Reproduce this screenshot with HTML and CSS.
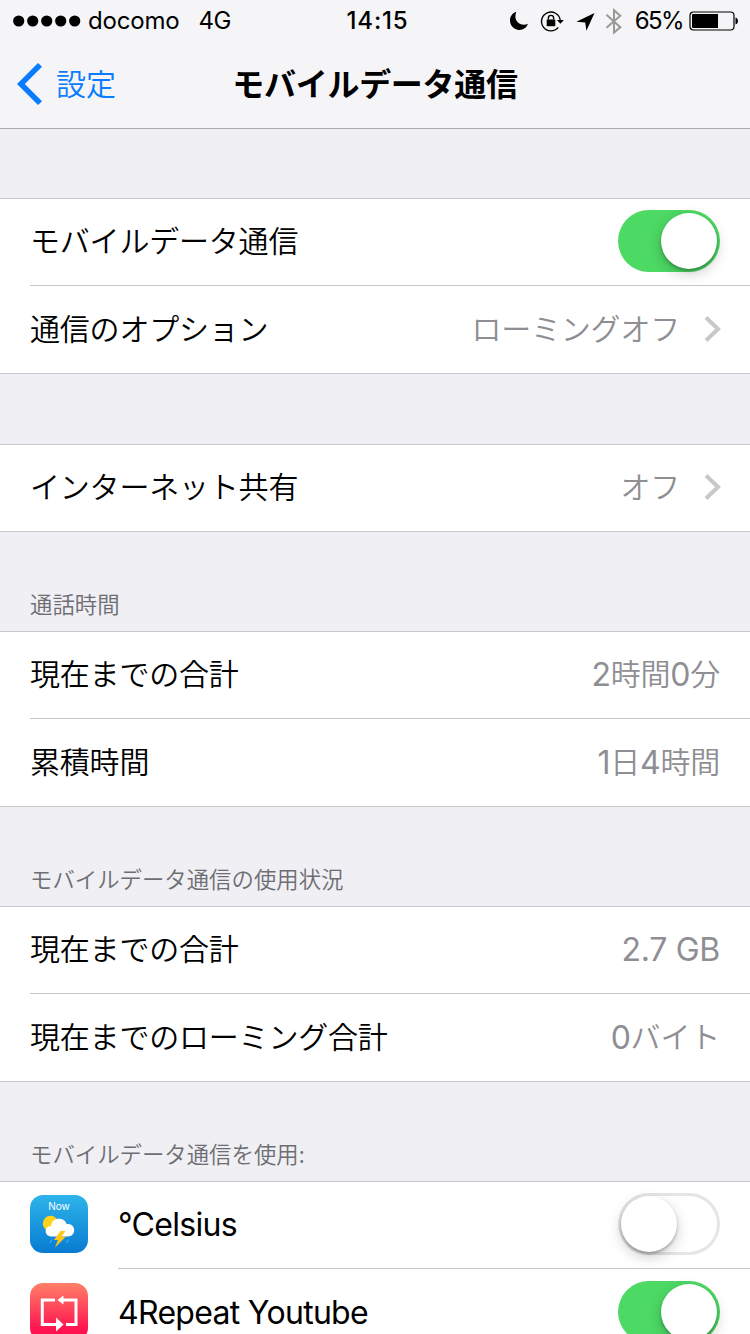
FILE: index.html
```html
<!DOCTYPE html>
<html lang="ja">
<head>
<meta charset="UTF-8">
<meta name="viewport" content="width=device-width, initial-scale=1.0">
<title>モバイルデータ通信</title>
<link rel="stylesheet" href="styles.css">
</head>
<body>
  <header class="header">
    <div class="status-bar">
      <div class="status-left">
        <svg class="signal" width="68" height="12" viewBox="0 0 68 12">
          <circle cx="5.7" cy="6" r="5.6"/>
          <circle cx="19.7" cy="6" r="5.6"/>
          <circle cx="33.7" cy="6" r="5.6"/>
          <circle cx="47.7" cy="6" r="5.6"/>
          <circle cx="61.7" cy="6" r="5.6"/>
        </svg>
        <span class="carrier">docomo</span>
        <span class="network">4G</span>
      </div>
      <div class="clock">14:15</div>
      <div class="status-right">
        <svg class="status-icons" width="118" height="40" viewBox="0 0 118 40">
          <!-- おやすみモード -->
          <path d="M8.3 10.8C4.8 11.9 2 15.2 2 19.3C2 24.7 6 28.9 11.3 28.9C15.3 28.9 18.7 26.5 20 22.7C18.7 23.4 17.3 23.8 15.8 23.8C10.8 23.8 7.4 20.2 7.4 15.6C7.4 13.8 7.7 12.2 8.3 10.8Z"/>
          <!-- 画面の向きのロック -->
          <path d="M50.2 26.4A9.4 9.4 0 1 1 52.2 19" fill="none" stroke="#000" stroke-width="1.4"/>
          <path d="M48.9 18.9H55.9L52.4 22.8Z"/>
          <path d="M38.7 18.5H47.3V25.2H38.7Z"/>
          <path d="M40.4 18.6V16.8C40.4 13.6 45.6 13.6 45.6 16.8V18.6" fill="none" stroke="#000" stroke-width="1.4"/>
          <!-- 位置情報 -->
          <path d="M86.5 12L78.4 29.7L77.2 21.6L68.4 20.7Z"/>
          <!-- Bluetooth -->
          <path d="M98.5 13.8L112.3 26.2L106 31.5V9.2L112.3 14.8L98.5 26.8" fill="none" stroke="#999" stroke-width="2"/>
        </svg>
        <span class="percent">65%</span>
        <svg class="battery" width="50" height="20" viewBox="0 0 50 20">
          <rect x="1" y="1" width="44" height="18" rx="3.5" fill="none" stroke="#000" stroke-width="1.2"/>
          <path d="M4 3H29V17H4Q3 17 3 16V4Q3 3 4 3Z"/>
          <path d="M46.5 6.6C49.8 7 49.8 13 46.5 13.4Z"/>
        </svg>
      </div>
    </div>
    <nav class="nav-bar">
      <a href="#" class="back">
        <svg width="27" height="42" viewBox="0 0 27 42">
          <path d="M22 0L26 3.8L8.8 21L26 38.2L22 42L1 21Z" fill="#0a7cff"/>
        </svg>
        <span>設定</span>
      </a>
      <h1 class="title">モバイルデータ通信</h1>
    </nav>
  </header>

  <main class="settings">
    <ul class="group first">
      <li class="row">
        <span class="label">モバイルデータ通信</span>
        <span class="switch on"></span>
      </li>
      <li class="row">
        <span class="label">通信のオプション</span>
        <span class="value">ローミングオフ</span>
        <svg class="chevron" width="17" height="26" viewBox="0 0 17 26"><path d="M2 1.5L14 13L2 24.5"/></svg>
      </li>
    </ul>

    <ul class="group">
      <li class="row">
        <span class="label">インターネット共有</span>
        <span class="value">オフ</span>
        <svg class="chevron" width="17" height="26" viewBox="0 0 17 26"><path d="M2 1.5L14 13L2 24.5"/></svg>
      </li>
    </ul>

    <h2 class="section-title">通話時間</h2>
    <ul class="group titled">
      <li class="row">
        <span class="label">現在までの合計</span>
        <span class="value"><span class="num">2</span>時間<span class="num">0</span>分</span>
      </li>
      <li class="row">
        <span class="label">累積時間</span>
        <span class="value"><span class="num">1</span>日<span class="num">4</span>時間</span>
      </li>
    </ul>

    <h2 class="section-title">モバイルデータ通信の使用状況</h2>
    <ul class="group titled">
      <li class="row">
        <span class="label">現在までの合計</span>
        <span class="value"><span class="num">2.7 GB</span></span>
      </li>
      <li class="row">
        <span class="label">現在までのローミング合計</span>
        <span class="value"><span class="num">0</span>バイト</span>
      </li>
    </ul>

    <h2 class="section-title">モバイルデータ通信を使用:</h2>
    <ul class="group titled apps">
      <li class="row">
        <svg class="app-icon" width="58" height="58" viewBox="0 0 58 58">
          <defs>
            <linearGradient id="sky" x1="0" y1="0" x2="0" y2="1">
              <stop offset="0" stop-color="#2db4ea"/>
              <stop offset="1" stop-color="#087bd2"/>
            </linearGradient>
          </defs>
          <rect width="58" height="58" rx="13" fill="url(#sky)"/>
          <text x="29" y="15" class="now">Now</text>
          <circle cx="20.5" cy="28.5" r="7.7" fill="#ffd21c"/>
          <path d="M22 41.5C13.8 41.5 13.8 31.5 21 31C22 21 35.5 22 36.5 29.2C46 27.5 47 41.5 38 41.5Z" fill="#fff"/>
          <path d="M30.5 36L24 45H28L25 52.5L36 41.5H31.5L35.5 36Z" fill="#ffc61a"/>
          <path d="M22 44.5L20 48M38.5 44.5L36.5 48" stroke="#45b8f5" stroke-width="1"/>
        </svg>
        <span class="label latin">°Celsius</span>
        <span class="switch"></span>
      </li>
      <li class="row">
        <svg class="app-icon" width="58" height="58" viewBox="0 0 58 58">
          <defs>
            <linearGradient id="repeat" x1="0" y1="0" x2="0" y2="1">
              <stop offset="0" stop-color="#ff8068"/>
              <stop offset="0.8" stop-color="#ff1450"/>
              <stop offset="1" stop-color="#ff0a4a"/>
            </linearGradient>
          </defs>
          <rect width="58" height="58" rx="13" fill="url(#repeat)"/>
          <path d="M25 17H12.3V41.5H27M33 17H46V41.5H36" fill="none" stroke="#fff" stroke-width="3"/>
          <path d="M27.5 17L33.5 12.5V21.5ZM26 34.5L33.5 41.5L26 48.5Z" fill="#fff"/>
        </svg>
        <span class="label latin">4Repeat Youtube</span>
        <span class="switch on"></span>
      </li>
    </ul>
  </main>
</body>
</html>
```
FILE: styles.css
```css
* {
  box-sizing: border-box;
}
body {
  margin: 0;
  height: 1334px;
  overflow: hidden;
  background-color: #efeff4;
  color: #000;
  font-family: "Noto Sans CJK JP DemiLight", "Noto Sans CJK JP", sans-serif;
  font-weight: 350;
}

/* ヘッダー */
.header {
  height: 129px;
  background-color: #f5f5f7;
  border-bottom: 1px solid #a9a9ae;
}
.status-bar {
  display: grid;
  grid-template-columns: 1fr auto 1fr;
  height: 40px;
  padding: 0 11px 0 13px;
  font-family: Inter, sans-serif;
  font-weight: 400;
  font-size: 24px;
  line-height: 41px;
}
.status-left,
.status-right {
  display: flex;
  align-items: center;
}
.carrier {
  margin-left: 7px;
  letter-spacing: -0.2px;
}
.network {
  margin-left: 19px;
  letter-spacing: -0.5px;
}
.clock {
  padding-left: 3px;
  font-weight: 500;
  letter-spacing: 0.8px;
}
.status-right {
  justify-content: flex-end;
}
.percent {
  margin: 0 6px 0 9px;
  letter-spacing: -1.6px;
}
.nav-bar {
  display: grid;
  grid-template-columns: 1fr auto 1fr;
  align-items: center;
  height: 88px;
}
.back {
  display: flex;
  align-items: center;
  padding-left: 16px;
  color: #0a7cff;
  font-size: 30px;
  text-decoration: none;
}
.back span {
  margin-left: 13px;
  padding-bottom: 4px;
}
.title {
  margin: 0;
  padding-bottom: 4px;
  font-family: "Noto Sans CJK JP", sans-serif;
  font-size: 32px;
  font-weight: 700;
  letter-spacing: -0.3px;
}

/* 設定リスト */
.group {
  margin: 70px 0 0;
  padding: 0;
  list-style: none;
  background-color: #fff;
  border-top: 1px solid #c8c7cc;
  border-bottom: 1px solid #c8c7cc;
}
.group.first {
  margin-top: 69px;
}
.group.titled {
  margin-top: 0;
}
.row {
  display: flex;
  align-items: center;
  height: 86px;
  padding: 0 30px 2px;
  font-size: 30px;
  line-height: 44px;
}
.row + .row {
  height: 88px;
  padding-bottom: 0;
  background: linear-gradient(#c8c7cc, #c8c7cc) 30px 0 / 100% 1px no-repeat;
}
.apps .row + .row {
  background-position: 118px 0;
}
.label {
  flex: 1;
  padding-bottom: 4px;
  letter-spacing: -0.2px;
}
.value {
  padding-bottom: 4px;
  color: #8e8e93;
  letter-spacing: -0.2px;
}
.num,
.latin {
  font-family: Inter, sans-serif;
  font-weight: 400;
  font-size: 32px;
}
.num {
  font-weight: 370;
  line-height: 1;
  letter-spacing: -0.3px;
  vertical-align: -1px;
}
.latin {
  padding: 2px 0 0;
  letter-spacing: -0.7px;
}
.chevron {
  margin: 0 -1px 0 24px;
  fill: none;
  stroke: #c7c7cc;
  stroke-width: 4;
}
.section-title {
  height: 99px;
  margin: 0;
  padding: 54px 30px 0;
  color: #6d6d72;
  font-size: 22.4px;
  font-weight: 350;
  line-height: 34px;
}

/* アプリ一覧 */
.app-icon {
  margin-right: 30px;
}
.now {
  fill: #fff;
  font-family: Inter, sans-serif;
  font-size: 10px;
  font-weight: 400;
  text-anchor: middle;
}

/* スイッチ */
.switch {
  display: flex;
  width: 102px;
  height: 62px;
  padding: 3px;
  border-radius: 31px;
  box-shadow: inset 0 0 0 3px #e5e5e5;
}
.switch::before {
  content: "";
  width: 56px;
  height: 56px;
  border-radius: 50%;
  background-color: #fff;
  box-shadow: 0 5px 14px rgba(0, 0, 0, 0.2), 0 2px 3px rgba(0, 0, 0, 0.25);
}
.switch.on {
  justify-content: flex-end;
  background-color: #4cd964;
  box-shadow: none;
}
```
